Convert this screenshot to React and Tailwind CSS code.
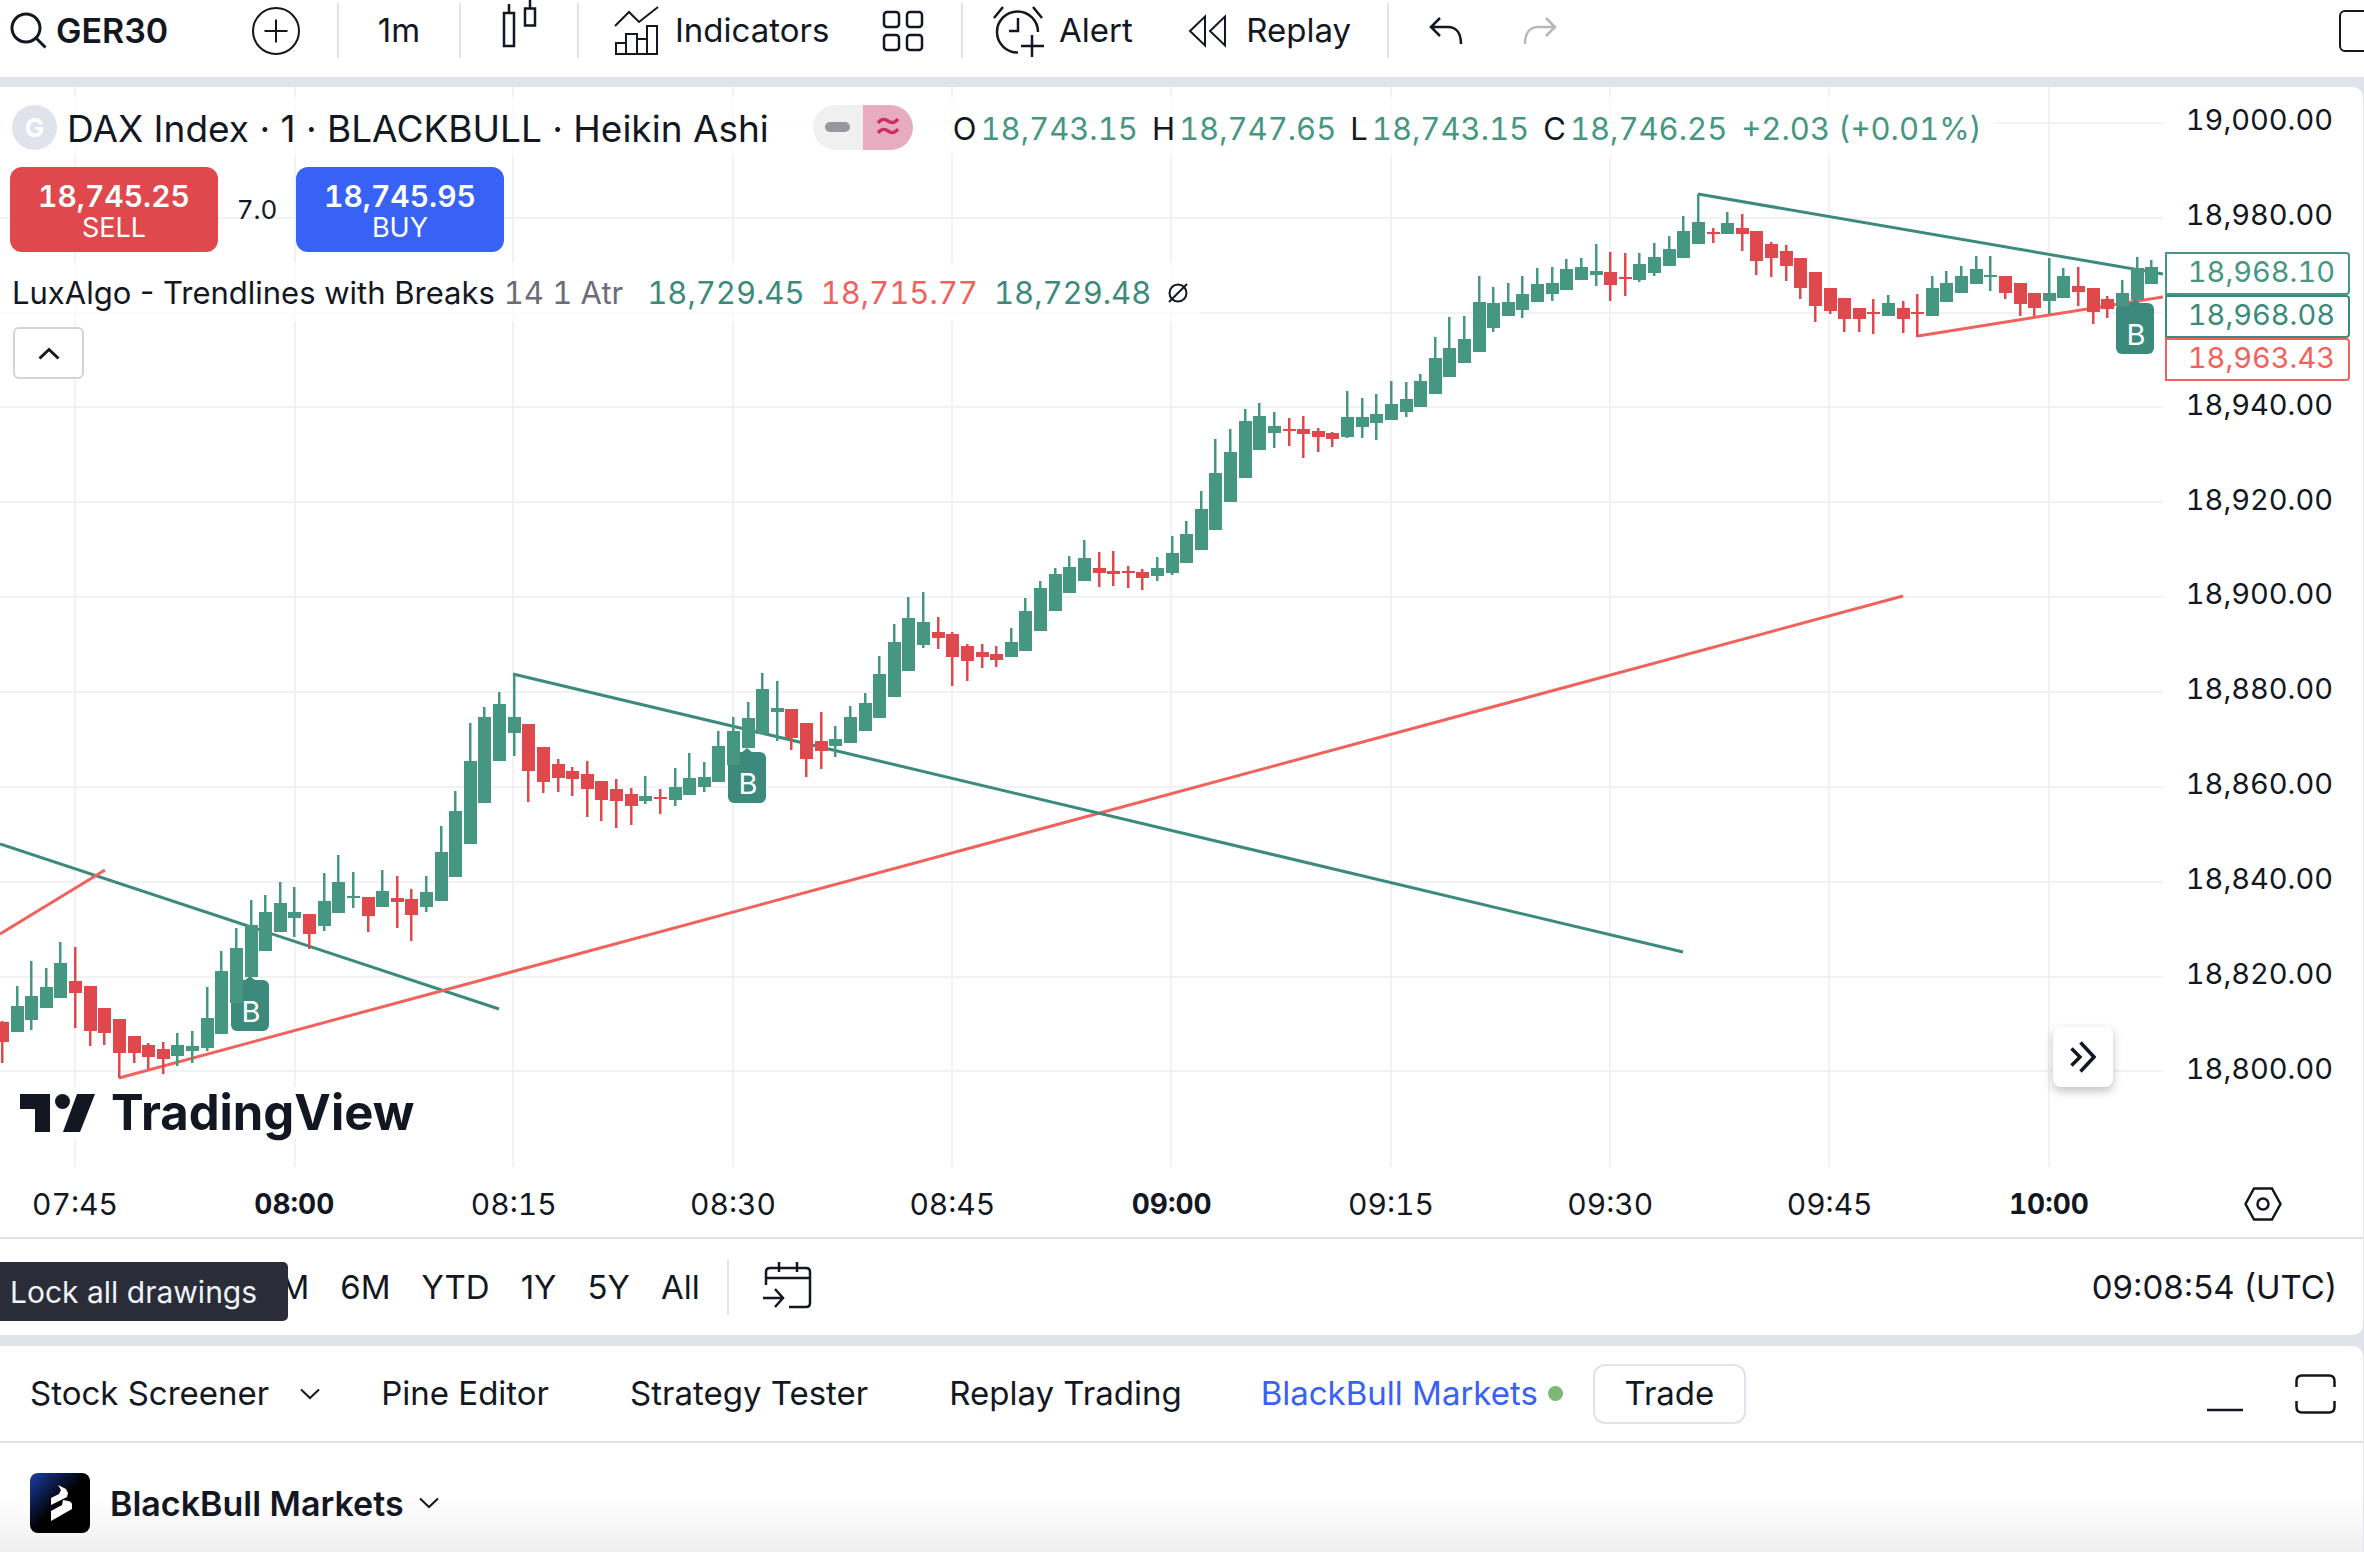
import React from "react";

const GREEN = "#459782";
const RED = "#df484c";

// [direction, body top, body bottom, wick top, wick bottom]
const candles = [
  ["d", 1022, 1042, 1021, 1063], ["u", 1006, 1032, 986, 1032], ["u", 996, 1020, 961, 1030], ["u", 987, 1008, 968, 1008],
  ["u", 963, 998, 942, 998], ["d", 981, 993, 947, 1028], ["d", 986, 1031, 986, 1046], ["d", 1008, 1033, 1008, 1045],
  ["d", 1019, 1053, 1019, 1078], ["d", 1036, 1053, 1036, 1063], ["d", 1045, 1057, 1043, 1069], ["d", 1049, 1059, 1042, 1074],
  ["u", 1045, 1056, 1033, 1066], ["u", 1046, 1051, 1031, 1063], ["u", 1018, 1048, 987, 1051], ["u", 971, 1034, 951, 1034],
  ["u", 948, 1003, 928, 1003], ["u", 925, 977, 900, 977], ["u", 912, 951, 895, 951], ["u", 903, 932, 882, 932],
  ["u", 912, 918, 887, 937], ["d", 914, 934, 914, 949], ["u", 901, 926, 873, 931], ["u", 882, 913, 855, 913],
  ["u", 896, 898, 872, 908], ["d", 897, 916, 897, 932], ["u", 891, 907, 870, 907], ["d", 898, 902, 876, 928],
  ["d", 899, 915, 889, 941], ["u", 892, 907, 876, 912], ["u", 852, 901, 826, 901], ["u", 811, 877, 791, 877],
  ["u", 761, 844, 723, 844], ["u", 717, 803, 707, 803], ["u", 704, 761, 692, 761], ["u", 717, 733, 673, 756],
  ["d", 724, 771, 724, 802], ["d", 747, 782, 747, 793], ["d", 764, 778, 759, 792], ["d", 771, 779, 767, 796],
  ["d", 774, 789, 761, 817], ["d", 781, 800, 781, 821], ["d", 789, 801, 779, 828], ["d", 794, 806, 788, 825],
  ["u", 796, 801, 776, 804], ["d", 797, 799, 789, 814], ["u", 787, 800, 768, 806], ["u", 778, 795, 753, 795],
  ["u", 777, 787, 762, 792], ["u", 746, 782, 731, 782], ["u", 731, 765, 717, 765], ["u", 718, 748, 702, 748],
  ["u", 689, 734, 673, 734], ["u", 708, 712, 681, 741], ["d", 709, 738, 709, 750], ["d", 723, 759, 723, 777],
  ["d", 741, 751, 712, 769], ["u", 739, 746, 726, 757], ["u", 717, 743, 706, 743], ["u", 703, 731, 693, 731],
  ["u", 674, 718, 656, 718], ["u", 642, 697, 624, 697], ["u", 618, 671, 597, 671], ["u", 622, 645, 592, 648],
  ["d", 632, 638, 617, 649], ["d", 634, 657, 632, 686], ["d", 646, 661, 644, 681], ["d", 652, 657, 644, 668],
  ["d", 654, 660, 646, 667], ["u", 642, 657, 628, 657], ["u", 611, 651, 598, 651], ["u", 588, 631, 581, 631],
  ["u", 574, 611, 568, 611], ["u", 567, 593, 556, 593], ["u", 558, 581, 540, 581], ["d", 568, 573, 552, 587],
  ["d", 571, 574, 551, 586], ["d", 571, 573, 566, 588], ["d", 572, 578, 569, 590], ["u", 568, 576, 557, 581],
  ["u", 553, 573, 536, 575], ["u", 534, 563, 521, 563], ["u", 509, 550, 491, 550], ["u", 473, 530, 439, 530],
  ["u", 452, 502, 429, 502], ["u", 421, 478, 409, 478], ["u", 416, 450, 403, 450], ["u", 426, 433, 412, 448],
  ["d", 429, 431, 418, 446], ["d", 429, 434, 416, 458], ["d", 431, 437, 428, 452], ["d", 433, 439, 432, 447],
  ["u", 417, 437, 391, 438], ["u", 417, 427, 398, 438], ["u", 414, 423, 394, 440], ["u", 404, 420, 381, 420],
  ["u", 399, 412, 382, 417], ["u", 381, 407, 374, 407], ["u", 358, 394, 337, 394], ["u", 348, 377, 317, 377],
  ["u", 339, 363, 316, 363], ["u", 302, 352, 276, 352], ["u", 303, 328, 287, 332], ["u", 302, 316, 283, 316],
  ["u", 294, 310, 276, 318], ["u", 284, 302, 268, 302], ["u", 283, 294, 267, 301], ["u", 269, 290, 259, 290],
  ["u", 267, 280, 258, 280], ["u", 271, 275, 244, 286], ["d", 272, 285, 252, 301], ["d", 277, 279, 253, 296],
  ["u", 264, 280, 253, 282], ["u", 257, 273, 243, 276], ["u", 249, 266, 236, 266], ["u", 231, 258, 216, 258],
  ["u", 222, 244, 194, 244], ["d", 232, 234, 228, 243], ["u", 223, 234, 212, 234], ["d", 228, 234, 214, 251],
  ["d", 231, 261, 231, 275], ["d", 244, 258, 242, 277], ["d", 251, 266, 245, 281], ["d", 258, 288, 258, 299],
  ["d", 272, 306, 272, 322], ["d", 288, 311, 288, 314], ["d", 298, 319, 298, 332], ["d", 308, 319, 308, 332],
  ["d", 312, 314, 299, 334], ["u", 303, 316, 295, 316], ["d", 308, 319, 301, 333], ["d", 312, 314, 294, 337],
  ["u", 288, 316, 276, 316], ["u", 283, 302, 271, 302], ["u", 276, 293, 266, 293], ["u", 269, 284, 256, 284],
  ["u", 275, 277, 256, 291], ["d", 276, 293, 276, 299], ["d", 283, 304, 283, 316], ["d", 293, 308, 293, 316],
  ["u", 293, 301, 258, 314], ["u", 276, 298, 268, 298], ["d", 286, 292, 267, 306], ["d", 288, 312, 288, 324],
  ["d", 299, 309, 296, 318], ["u", 293, 306, 280, 306], ["u", 268, 300, 257, 300], ["u", 267, 284, 260, 284],
];

const gridX = [75, 295, 513, 733, 952, 1171, 1391, 1610, 1829, 2049];
const gridY = [123, 218, 313, 407, 502, 597, 692, 787, 882, 977, 1071];

const trendlines = [
  ["#3b8a7c", 0, 844, 499, 1009],
  ["#f0625c", 0, 934, 105, 870],
  ["#f0625c", 119, 1078, 1903, 596],
  ["#3b8a7c", 513, 674, 1683, 952],
  ["#3b8a7c", 1698, 194, 2163, 274],
  ["#f0625c", 1918, 336, 2163, 297],
];

const breaks = [[250, 977], [747, 749], [2135, 300]];

const prices = [
  "19,000.00", "18,980.00", "", "18,940.00", "18,920.00", "18,900.00",
  "18,880.00", "18,860.00", "18,840.00", "18,820.00", "18,800.00",
];

const times = [
  "07:45", "08:00", "08:15", "08:30", "08:45", "09:00", "09:15", "09:30", "09:45", "10:00",
];

const ohlc = [["O", "18,743.15"], ["H", "18,747.65"], ["L", "18,743.15"], ["C", "18,746.25"]];

function Divider() {
  return <div className="h-[55px] w-[2px] shrink-0 bg-[#e0e3eb]" />;
}

function ChevronDown() {
  return (
    <svg width="20" height="12" viewBox="0 0 20 12" fill="none" stroke="currentColor" strokeWidth="2">
      <path d="M1 1.5l9 8.5 9-8.5" />
    </svg>
  );
}

function Toolbar() {
  return (
    <header className="flex h-[77px] items-start overflow-hidden bg-white">
      <div className="flex h-[61px] w-full items-center">
        <div className="flex w-[337px] shrink-0 items-center justify-between pl-[10px] pr-[36px]">
          <button className="flex items-center gap-[9px] text-[34px] font-semibold">
            <svg width="37" height="37" viewBox="0 0 37 37" fill="none" stroke="currentColor" strokeWidth="3">
              <circle cx="16" cy="16" r="14" />
              <path d="M25.500 25.500l10 10" />
            </svg>
            GER30
          </button>
          <button aria-label="Compare symbols">
            <svg width="50" height="50" viewBox="0 0 50 50" fill="none" stroke="currentColor" strokeWidth="2">
              <circle cx="25" cy="25" r="23" />
              <path d="M25 13.500v23M13.500 25h23" />
            </svg>
          </button>
        </div>
        <Divider />
        <button className="w-[120px] shrink-0 text-[33px]">1m</button>
        <Divider />
        <button className="flex w-[116px] shrink-0 justify-center" aria-label="Bar style">
          <svg width="36" height="61" viewBox="0 0 36 61" fill="none" stroke="currentColor" strokeWidth="2.500">
            <path d="M3 13h10v33H3zM8 13V4M24 8.500h10v17H24zM29 8V0" />
          </svg>
        </button>
        <Divider />
        <div className="flex w-[382px] shrink-0 items-center justify-between pl-[35px] pr-[37px]">
          <button className="flex items-center gap-[16px] text-[33px]">
            <svg width="45" height="50" viewBox="0 0 45 50" fill="none" stroke="currentColor" strokeWidth="2">
              <path d="M1 20L15 6l10 10L44 1M2 48V37h10v11M12 48V28h11v20M23 33h10v15M33 48V20h10v28M1 48h43" />
            </svg>
            Indicators
          </button>
          <button aria-label="Templates">
            <svg width="42" height="42" viewBox="0 0 42 42" fill="none" stroke="currentColor" strokeWidth="2.500">
              <rect x="2" y="2" width="15" height="15" rx="3" />
              <rect x="25" y="2" width="15" height="15" rx="3" />
              <rect x="2" y="25" width="15" height="15" rx="3" />
              <rect x="25" y="25" width="15" height="15" rx="3" />
            </svg>
          </button>
        </div>
        <Divider />
        <div className="flex w-[424px] shrink-0 items-center justify-between pl-[30px] pr-[36px]">
          <button className="flex items-center gap-[14px] text-[33px]">
            <svg width="52" height="54" viewBox="0 0 52 54" fill="none" stroke="currentColor" strokeWidth="2.500">
              <path d="M45 28A20.500 20.500 0 1 0 25 48.500M25 14v13h-9M1 14L10 3M49 14L40 3M39 31v22M28 42h23" />
            </svg>
            Alert
          </button>
          <button className="flex items-center gap-5 text-[33px]">
            <svg width="38" height="34" viewBox="0 0 38 34" fill="none" stroke="currentColor" strokeWidth="2">
              <path d="M17 2.500v29L2 17zM37 2.500v29L22 17z" />
            </svg>
            Replay
          </button>
        </div>
        <Divider />
        <div className="flex grow items-center gap-[60px] pl-[40px]">
          <button aria-label="Undo">
            <svg width="34" height="28" viewBox="0 0 34 28" fill="none" stroke="currentColor" strokeWidth="2.500">
              <path d="M11 1L2 10l9 9M2 10h17c8 0 13 6 13 17" />
            </svg>
          </button>
          <button className="text-[#b5b7bc]" aria-label="Redo">
            <svg width="34" height="28" viewBox="0 0 34 28" fill="none" stroke="currentColor" strokeWidth="2.500">
              <path d="M23 1l9 9-9 9M32 10H15C7 10 2 16 2 27" />
            </svg>
          </button>
        </div>
        <button className="-mr-[20px] h-[42px] w-[45px] shrink-0 rounded-[6px] border-2 border-[#131722]" aria-label="Layout" />
      </div>
    </header>
  );
}

function Chart() {
  return (
    <svg className="block h-auto w-full" viewBox="0 87 2163 1080">
      {gridX.map((x) => (
        <rect key={x} x={x - 1} y="87" width="2" height="1080" fill="#f2f2f3" />
      ))}
      {gridY.map((y) => (
        <rect key={y} x="0" y={y - 1} width="2163" height="2" fill="#f2f2f3" />
      ))}
      {trendlines.map(([color, x1, y1, x2, y2]) => (
        <line key={x1 + "-" + y1} x1={x1} y1={y1} x2={x2} y2={y2} stroke={color} strokeWidth="3" />
      ))}
      {breaks.map(([x, y]) => (
        <g key={x}>
          <path d={`M${x - 6} ${y + 4}l6-5 6 5z`} fill="#3b8a7c" />
          <rect x={x - 19} y={y + 3} width="38" height="51" rx="6" fill="#3b8a7c" />
        </g>
      ))}
      {candles.map(([dir, top, bottom, high, low], i) => {
        const x = Math.round(2 + i * 14.62);
        const color = dir === "u" ? GREEN : RED;
        return (
          <g key={i} fill={color}>
            <rect x={x - 1} y={high} width="2.500" height={low - high} />
            <rect x={x - 6} y={top} width="13" height={bottom - top} />
          </g>
        );
      })}
      {breaks.map(([x, y]) => (
        <text key={x} x={x + 1} y={y + 45} textAnchor="middle" fontSize="29" fill="#fff">B</text>
      ))}
    </svg>
  );
}

function Legend() {
  return (
    <div className="absolute left-0 top-[10px] flex flex-col items-start">
      <div className="flex h-[60px] items-center whitespace-nowrap bg-white/70 pl-3 pr-4">
        <span className="flex size-[45px] items-center justify-center rounded-full bg-[#e0e3eb] text-[26px] font-bold text-white">G</span>
        <h1 className="ml-[10px] pt-1 text-[37px]">DAX Index · 1 · BLACKBULL · Heikin Ashi</h1>
        <div className="ml-[44px] flex h-[45px] w-[100px] overflow-hidden rounded-full">
          <span className="flex w-1/2 items-center justify-center bg-[#f0f0f0]">
            <span className="h-[10px] w-[25px] rounded-full bg-[#9598a1]" />
          </span>
          <span className="flex w-1/2 items-center justify-center bg-[#e8acc0] text-[#cc2f5e]">
            <svg width="24" height="20" viewBox="0 0 24 20" fill="none" stroke="currentColor" strokeWidth="3.500">
              <path d="M2 6C6 1 9 2 12 4s6 3 10-2M2 16c4-5 7-4 10-2s6 3 10-2" />
            </svg>
          </span>
        </div>
        <div className="ml-[40px] flex gap-[14px] pt-1 text-[31px] tabular-nums text-[#459782]">
          {ohlc.map(([label, value]) => (
            <span key={label} className="flex gap-[4px]">
              <span className="text-[#131722]">{label}</span>
              {value}
            </span>
          ))}
          <span>+2.03 (+0.01%)</span>
        </div>
      </div>

      <div className="flex h-[105px] items-center pl-[10px] tabular-nums text-white">
        <button className="flex h-[85px] w-[208px] flex-col items-center justify-center rounded-[12px] bg-[#df484c] pt-[5px] leading-8">
          <span className="text-[30px] font-semibold">18,745.25</span>
          <span className="text-[27px]">SELL</span>
        </button>
        <span className="w-[78px] text-center text-[26px] text-[#131722]">7.0</span>
        <button className="flex h-[85px] w-[208px] flex-col items-center justify-center rounded-[12px] bg-[#3861f6] pt-[5px] leading-8">
          <span className="text-[30px] font-semibold">18,745.95</span>
          <span className="text-[27px]">BUY</span>
        </button>
      </div>

      <div className="flex h-[60px] items-center gap-[16px] whitespace-nowrap bg-white/70 pl-3 pr-3 pt-[2px] text-[31px]">
        <h2 className="pr-2">LuxAlgo - Trendlines with Breaks <span className="tabular-nums text-[#6a6d78]">14 1 Atr</span></h2>
        <span className="tabular-nums text-[#3b8a7c]">18,729.45</span>
        <span className="tabular-nums text-[#f0625c]">18,715.77</span>
        <span className="tabular-nums text-[#3b8a7c]">18,729.48</span>
        <svg width="22" height="22" viewBox="0 0 22 22" fill="none" stroke="currentColor" strokeWidth="2">
          <circle cx="11" cy="11" r="8.500" />
          <path d="M2 20L20 2" />
        </svg>
      </div>

      <button className="ml-[13px] mt-[5px] flex h-[52px] w-[71px] items-center justify-center rounded-[6px] border-2 border-[#d1d4dc] bg-white" aria-label="Collapse legend">
        <svg width="22" height="13" viewBox="0 0 22 13" fill="none" stroke="currentColor" strokeWidth="3">
          <path d="M1.500 11.500L11 2.500l9.500 9" />
        </svg>
      </button>
    </div>
  );
}

function TradingViewLogo() {
  return (
    <a href="#" className="absolute bottom-[28px] left-5 flex h-[52px] items-center gap-[16px] bg-white text-[49px] font-bold">
      <svg width="75" height="38" viewBox="0 0 75 38" fill="currentColor">
        <path d="M0 0h30v38H15V15H0zM57 0h18L60 38H43z" />
        <circle cx="42.500" cy="7.500" r="7.500" />
      </svg>
      TradingView
    </a>
  );
}

function PriceAxis() {
  return (
    <div className="relative flex w-[200px] shrink-0 flex-col justify-between pb-[78px] pr-[30px] pt-[13px] text-right text-[29px] tabular-nums">
      {prices.map((p, i) => (
        <span key={i} className="h-10 leading-10">{p}</span>
      ))}
      <div className="absolute left-[2px] top-[165px] w-[185px] bg-white">
        <div className="h-[43px] rounded-r border-2 border-[#459782] pr-[13px] leading-9 text-[#459782]">18,968.10</div>
        <div className="h-[43px] rounded-r border-2 border-[#3b8a7c] pr-[13px] leading-9 text-[#3b8a7c]">18,968.08</div>
        <div className="h-[43px] rounded-r border-2 border-[#f0625c] pr-[13px] leading-9 text-[#f0625c]">18,963.43</div>
      </div>
    </div>
  );
}

function TimeAxis() {
  return (
    <div className="flex h-[70px] items-center pt-1">
      <div className="flex grow items-center justify-between pl-[25px] pr-[64px] text-[30px] tabular-nums">
        {times.map((t) => (
          <span key={t} className={t.endsWith(":00") ? "flex w-[100px] justify-center text-[28px] font-bold" : "flex w-[100px] justify-center"}>
            {t}
          </span>
        ))}
      </div>
      <button className="flex w-[200px] shrink-0 justify-center" aria-label="Axis settings">
        <svg width="38" height="34" viewBox="0 0 38 34" fill="none" stroke="currentColor" strokeWidth="2.500">
          <path d="M10 1.500h18L36.500 17 28 32.500H10L1.500 17z" />
          <circle cx="19" cy="17" r="5.500" />
        </svg>
      </button>
    </div>
  );
}

function RangeBar() {
  return (
    <div className="relative flex h-[98px] items-center justify-between border-t-2 border-[#e0e3eb] pl-[259px] pr-[26px] text-[33px]">
      <div className="flex items-center">
        <div className="flex items-center gap-[31px] pr-[27px] pt-[2px]">
          <button>3M</button>
          <button>6M</button>
          <button>YTD</button>
          <button>1Y</button>
          <button>5Y</button>
          <button>All</button>
        </div>
        <Divider />
        <button className="pb-1 pl-[33px]" aria-label="Go to date">
          <svg width="50" height="48" viewBox="0 0 50 48" fill="none" stroke="currentColor" strokeWidth="2.500">
            <path d="M4 24V11q0-4 4-4h36q4 0 4 4v31q0 4-4 4H27M4 17h44M17 1v10M35 1v10M1 37h20M13 28l8 9-8 9" />
          </svg>
        </button>
      </div>
      <button className="pt-[2px]">09:08:54 (UTC)</button>
      <div role="tooltip" className="absolute left-0 top-[23px] flex h-[59px] w-[288px] items-center rounded-r-[5px] bg-[#2a2d38] pl-[10px] pt-[2px] text-[30px] text-[#f0f3fa]">
        Lock all drawings
      </div>
    </div>
  );
}

function BottomPanel() {
  return (
    <section className="flex grow flex-col rounded-r-[10px] bg-white">
      <nav className="flex h-[97px] items-center border-b-2 border-[#e0e3eb] pl-[30px] pr-[27px] text-[33px]">
        <button className="flex items-center gap-[31px]">
          Stock Screener
          <ChevronDown />
        </button>
        <button className="ml-[61px]">Pine Editor</button>
        <button className="ml-[81px]">Strategy Tester</button>
        <button className="ml-[81px]">Replay Trading</button>
        <button className="ml-[79px] flex items-center gap-[10px] text-[#3861f6]">
          BlackBull Markets
          <span className="size-[15px] rounded-full bg-[#7cb972]" />
        </button>
        <button className="ml-[30px] h-[60px] w-[153px] rounded-[12px] border-2 border-[#e0e3eb]">Trade</button>
        <div className="ml-auto flex items-center gap-[52px]">
          <button aria-label="Minimize">
            <svg width="36" height="40" viewBox="0 0 36 40" stroke="currentColor" strokeWidth="2.500">
              <path d="M0 36h36" />
            </svg>
          </button>
          <button aria-label="Maximize">
            <svg width="41" height="40" viewBox="0 0 41 40" fill="none" stroke="currentColor" strokeWidth="2.500">
              <path d="M1.500 13V7q0-5.500 5.500-5.500h27q5.500 0 5.500 5.500v6M1.500 27v6q0 5.500 5.500 5.500h27q5.500 0 5.500-5.500v-6" />
            </svg>
          </button>
        </div>
      </nav>
      <div className="flex h-[109px] grow items-center bg-linear-to-b from-white from-50% to-[#f0f0f0] pb-[11px]">
        <button className="flex items-center pl-[30px] pt-[22px] text-[34px] font-semibold">
          <svg className="mr-[20px]" width="60" height="60" viewBox="0 0 60 60">
            <defs>
              <linearGradient id="bb" x1="0" y1="0" x2="0.500" y2="0.500">
                <stop offset="0" stopColor="#1c40a8" />
                <stop offset="1" stopColor="#000" />
              </linearGradient>
            </defs>
            <rect width="60" height="60" rx="8" fill="url(#bb)" />
            <path d="M28 12l8 4 2 4-1 4-16 8v-7l8-4 2-4zM33 27q9 1 9 4v5L21 48V38l11-6z" fill="#fff" />
          </svg>
          BlackBull Markets
          <span className="ml-[15px]"><ChevronDown /></span>
        </button>
      </div>
    </section>
  );
}

export default function App() {
  return (
    <div className="flex min-h-screen flex-col bg-[#e0e3eb] font-[Inter,'Liberation_Sans',sans-serif] text-[#131722]">
      <Toolbar />
      <main className="mt-[10px] flex grow flex-col gap-[11px] pr-px">
        <section className="rounded-r-[10px] bg-white">
          <div className="flex">
            <div className="relative min-w-0 grow">
              <Chart />
              <Legend />
              <TradingViewLogo />
              <button className="absolute bottom-[80px] right-[50px] flex size-[60px] items-center justify-center rounded-[8px] bg-white shadow-[0_4px_10px_rgba(0,0,0,0.25)]" aria-label="Scroll to latest bar">
                <svg width="26" height="32" viewBox="0 0 26 32" fill="none" stroke="currentColor" strokeWidth="3.500">
                  <path d="M1.500 7.500l8.500 8.500-8.500 8.500M10.500 1.500L24 16 10.500 30.500" />
                </svg>
              </button>
            </div>
            <PriceAxis />
          </div>
          <TimeAxis />
          <RangeBar />
        </section>
        <BottomPanel />
      </main>
    </div>
  );
}
